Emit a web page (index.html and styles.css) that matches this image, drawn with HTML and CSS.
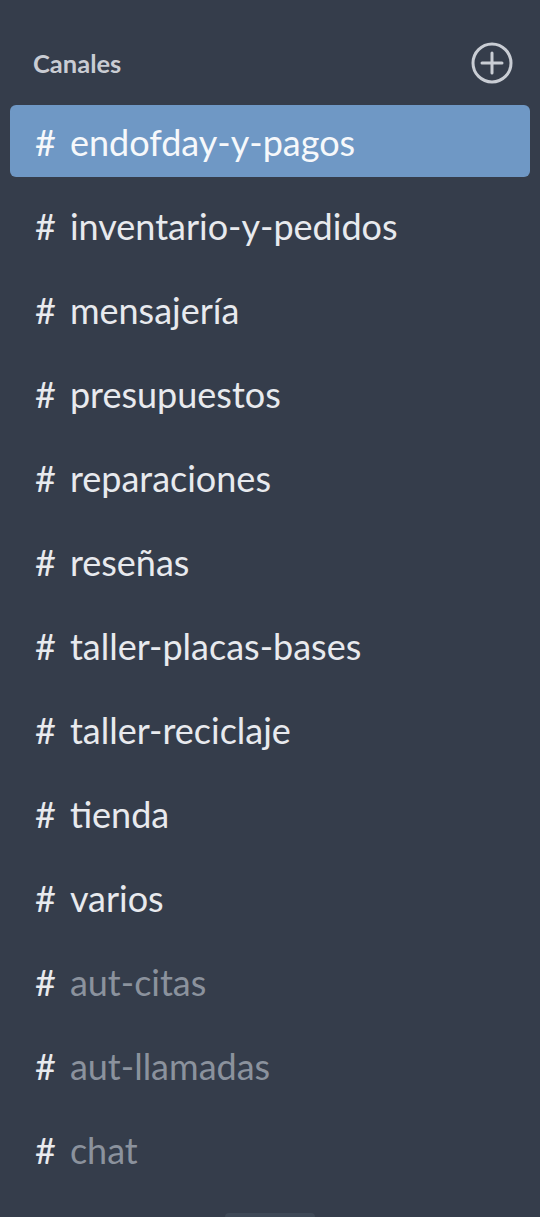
FILE: index.html
```html
<!DOCTYPE html>
<html lang="es">
<head>
<meta charset="utf-8">
<link rel="stylesheet" href="styles.css">
</head>
<body>
<div class="sidebar">
  <div class="header">
    <span class="title">Canales</span>
    <svg class="add" width="44" height="44" viewBox="0 0 44 44">
      <circle cx="22" cy="22" r="19" fill="none" stroke="#c9cdd4" stroke-width="3"/>
      <path d="M22 12V32M12 22H32" stroke="#c9cdd4" stroke-width="3" stroke-linecap="round"/>
    </svg>
  </div>
  <ul class="channels">
    <li class="channel active"><span class="hash">#</span><span class="name">endofday-y-pagos</span></li>
    <li class="channel"><span class="hash">#</span><span class="name">inventario-y-pedidos</span></li>
    <li class="channel"><span class="hash">#</span><span class="name">mensajería</span></li>
    <li class="channel"><span class="hash">#</span><span class="name">presupuestos</span></li>
    <li class="channel"><span class="hash">#</span><span class="name">reparaciones</span></li>
    <li class="channel"><span class="hash">#</span><span class="name">reseñas</span></li>
    <li class="channel"><span class="hash">#</span><span class="name">taller-placas-bases</span></li>
    <li class="channel"><span class="hash">#</span><span class="name">taller-reciclaje</span></li>
    <li class="channel"><span class="hash">#</span><span class="name">tienda</span></li>
    <li class="channel"><span class="hash">#</span><span class="name">varios</span></li>
    <li class="channel muted"><span class="hash">#</span><span class="name">aut-citas</span></li>
    <li class="channel muted"><span class="hash">#</span><span class="name">aut-llamadas</span></li>
    <li class="channel muted"><span class="hash">#</span><span class="name">chat</span></li>
  </ul>
  <div class="handle"></div>
</div>
</body>
</html>
```
FILE: styles.css
```css
html, body {
  margin: 0;
  padding: 0;
  background: #353d4b;
  height: 100%;
  overflow: hidden;
}
.sidebar {
  position: relative;
  height: 1217px;
  font-family: Lato, "Noto Sans", sans-serif;
  color: #e8eaee;
}
.header {
  display: flex;
  align-items: center;
  justify-content: space-between;
  padding: 41px 26px 0 33px;
  height: 44px;
}
.title {
  font-size: 25.5px;
  font-weight: 700;
  color: #c9ccd3;
  margin-top: -1px;
}
.add {
  display: block;
}
.channels {
  list-style: none;
  margin: 20px 0 0;
  padding: 0 10px;
  display: flex;
  flex-direction: column;
  gap: 12px;
}
.channel {
  height: 72px;
  box-sizing: border-box;
  display: flex;
  align-items: center;
  padding: 1px 0 0 25px;
  border-radius: 6px;
  font-size: 36px;
  line-height: 1;
}
.hash {
  margin-right: 14px;
}
.channel.active {
  background: #6f98c5;
  color: #f6f8fb;
}
.channel.muted .name {
  color: #8b929d;
}
.handle {
  position: absolute;
  left: 225px;
  bottom: -4px;
  width: 90px;
  height: 8px;
  border-radius: 4px;
  background: #3f4957;
}
```
